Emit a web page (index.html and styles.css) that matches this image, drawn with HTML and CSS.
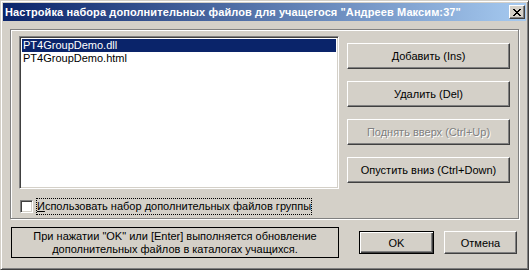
FILE: index.html
```html
<!DOCTYPE html>
<html lang="ru">
<head>
    <meta charset="UTF-8">
    <title>Настройка набора дополнительных файлов</title>
    <link rel="stylesheet" href="styles.css">
</head>
<body>
    <div class="window">
        <div class="titlebar">
            <span class="title">Настройка набора дополнительных файлов для учащегося "Андреев Максим:37"</span>
            <button class="close" type="button">
                <svg width="8" height="7" viewBox="0 0 8 7" shape-rendering="crispEdges">
                    <path d="M0 0h2v1h-2zM6 0h2v1h-2zM1 1h2v1h-2zM5 1h2v1h-2zM2 2h4v1h-4zM3 3h2v1h-2zM2 4h4v1h-4zM1 5h2v1h-2zM5 5h2v1h-2zM0 6h2v1h-2zM6 6h2v1h-2z" fill="#000"/>
                </svg>
            </button>
        </div>
        <div class="client">
            <div class="group">
                <div class="files">
                    <ul class="list">
                        <li class="item selected">PT4GroupDemo.dll</li>
                        <li class="item">PT4GroupDemo.html</li>
                    </ul>
                    <div class="actions">
                        <button class="btn" type="button">Добавить (Ins)</button>
                        <button class="btn" type="button">Удалить (Del)</button>
                        <button class="btn" type="button" disabled>Поднять вверх (Ctrl+Up)</button>
                        <button class="btn" type="button">Опустить вниз (Ctrl+Down)</button>
                    </div>
                </div>
                <label class="check">
                    <span class="box"></span>
                    <span class="check-text"><u>И</u>спользовать набор дополнительных файлов группы</span>
                </label>
            </div>
            <div class="footer">
                <div class="note">При нажатии "OK" или [Enter] выполняется обновление<br>дополнительных файлов в каталогах учащихся.</div>
                <button class="btn dlg default" type="button">OK</button>
                <button class="btn dlg" type="button">Отмена</button>
            </div>
        </div>
    </div>
</body>
</html>
```

FILE: styles.css
```css
body {
    margin: 0;
    font-family: "Liberation Sans", Arial, sans-serif;
    font-size: 11px;
    color: #000;
}
.window {
    box-sizing: border-box;
    width: 529px;
    height: 270px;
    background: #d4d0c8;
    border: 1px solid;
    border-color: #d4d0c8 #404040 #404040 #d4d0c8;
    box-shadow: inset 1px 1px #fff, inset -1px -1px #808080;
    padding: 2px 2px 3px 2px;
}
.titlebar {
    height: 18px;
    display: flex;
    align-items: center;
    justify-content: space-between;
    padding: 0 1px 0 2px;
    background: linear-gradient(to right, #0a246a, #a6caf0);
}
.title {
    color: #fff;
    font-weight: bold;
    font-size: 11px;
    letter-spacing: 0.1px;
    white-space: nowrap;
}
.close {
    box-sizing: border-box;
    width: 16px;
    height: 14px;
    padding: 0;
    display: flex;
    align-items: center;
    justify-content: center;
    background: #d4d0c8;
    border: 1px solid;
    border-color: #fff #404040 #404040 #fff;
    box-shadow: inset -1px -1px #808080;
}
.client {
    padding: 8px 7px 0 7px;
}
.group {
    height: 190px;
    box-sizing: border-box;
    border: 1px solid #808080;
    box-shadow: inset 1px 1px #fff, 1px 1px #fff;
    padding: 6px 8px 0 8px;
}
.files {
    display: flex;
    gap: 8px;
}
.list {
    box-sizing: border-box;
    width: 320px;
    height: 153px;
    margin: 0;
    list-style: none;
    background: #fff;
    border: 1px solid;
    border-color: #808080 #fff #fff #808080;
    box-shadow: inset 1px 1px #404040, inset -1px -1px #d4d0c8;
    padding: 2px;
}
.item {
    height: 13px;
    line-height: 13px;
    padding-left: 1px;
    white-space: nowrap;
}
.selected {
    background: #0a246a;
    color: #fff;
}
.actions {
    display: flex;
    flex-direction: column;
    gap: 12px;
    padding-top: 7px;
}
.btn {
    box-sizing: border-box;
    width: 163px;
    height: 26px;
    padding: 0;
    font-family: "Liberation Sans", Arial, sans-serif;
    font-size: 11px;
    color: #000;
    background: #d4d0c8;
    border: 1px solid;
    border-color: #fff #404040 #404040 #fff;
    box-shadow: inset -1px -1px #808080;
}
.btn:disabled {
    color: #808080;
    text-shadow: 1px 1px #fff;
}
.check {
    display: flex;
    align-items: center;
    gap: 3px;
    margin-top: 9px;
    margin-left: 1px;
}
.box {
    box-sizing: border-box;
    width: 13px;
    height: 13px;
    background: #fff;
    border: 1px solid;
    border-color: #808080 #fff #fff #808080;
    box-shadow: inset 1px 1px #404040, inset -1px -1px #d4d0c8;
}
.check-text {
    padding: 2px 1px;
    outline: 1px dotted #000;
    outline-offset: -1px;
    line-height: 13px;
}
.footer {
    display: flex;
    align-items: center;
    margin-top: 8px;
    margin-left: 1px;
}
.note {
    box-sizing: border-box;
    width: 328px;
    height: 31px;
    border: 1px solid #000;
    text-align: center;
    line-height: 13px;
    padding-top: 2px;
}
.dlg {
    width: 73px;
    height: 23px;
    margin-left: 10px;
}
.default {
    width: 75px;
    margin-left: 20px;
    border: 1px solid #000;
    box-shadow: inset 1px 1px #fff, inset -1px -1px #404040, inset -2px -2px #808080;
}
```
